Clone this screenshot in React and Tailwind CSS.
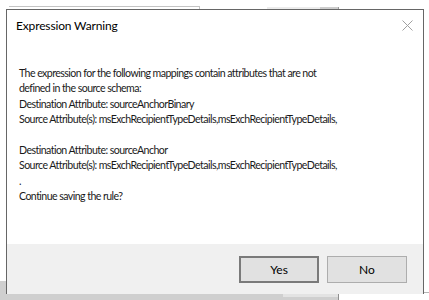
const Button = ({ label, primary }) => (
  <button
    className={
      primary
        ? "w-[80px] h-[27px] bg-[#e1e1e1] border-2 border-[#7a7a7a] text-[12px] text-black"
        : "w-[80px] h-[27px] bg-[#e1e1e1] border border-[#adadad] text-[12px] text-black"
    }
  >
    {label}
  </button>
);

const lines = [
  "The expression for the following mappings contain attributes that are not",
  "defined in the source schema:",
  "Destination Attribute: sourceAnchorBinary",
  "Source Attribute(s): msExchRecipientTypeDetails,msExchRecipientTypeDetails,",
  "\u00a0",
  "Destination Attribute: sourceAnchor",
  "Source Attribute(s): msExchRecipientTypeDetails,msExchRecipientTypeDetails,",
  ".",
  "Continue saving the rule?",
];

export default function App() {
  return (
    <div
      className="relative w-[429px] h-[300px] bg-white overflow-hidden pl-[6px] pt-[9px]"
      style={{ fontFamily: 'Lato, "Noto Sans", sans-serif' }}
    >
      {/* windows behind the dialog */}
      <div className="absolute left-[9px] top-[6px] w-[191px] h-[10px] border-t border-r border-[#c4c4c4]" />
      <div className="absolute left-[267px] top-[7px] w-[72px] h-[6px] bg-[#ececec] border-r border-[#9a9a9a] flex justify-end">
        <div className="w-[18px] h-full bg-[#cdcdcd]" />
      </div>
      <div className="absolute left-0 top-[281px] w-[8px] h-[19px] bg-[#cfcfcf]" />
      <div className="absolute left-0 top-[294px] w-[339px] h-[6px] bg-[#cfcfcf] border-r border-[#8f8f8f] flex justify-end">
        <div className="w-[55px] h-[3px] bg-[#e3e3e3]" />
      </div>
      <div className="absolute left-[424px] top-[292px] w-[5px] h-px bg-[#b5b5b5]" />

      {/* dialog */}
      <div className="relative w-[418px] h-[285px] bg-white border-l border-t border-r border-[#666666] flex flex-col">
        <div className="flex items-center justify-between h-[31px] pl-[9px] pr-[10px]">
          <span className="text-[12px] tracking-[-0.15px] text-black">Expression Warning</span>
          <svg width="11" height="11" viewBox="0 0 11 11" className="mt-[-1px]">
            <path d="M0.5 0.5 L10.5 10.5 M10.5 0.5 L0.5 10.5" stroke="#a0a0a0" strokeWidth="1" />
          </svg>
        </div>
        <div className="flex-1 pl-[12px] pt-[25px] text-[10.6px] leading-[15.4px] tracking-[-0.56px] text-[#1a1a1a]">
          {lines.map((t, i) => (
            <p key={i}>{t}</p>
          ))}
        </div>
        <div className="h-[50px] bg-[#f0f0f0] flex items-start justify-end gap-[8px] pt-[12px] pr-[16px]">
          <Button label="Yes" primary />
          <Button label="No" />
        </div>
      </div>
    </div>
  );
}
